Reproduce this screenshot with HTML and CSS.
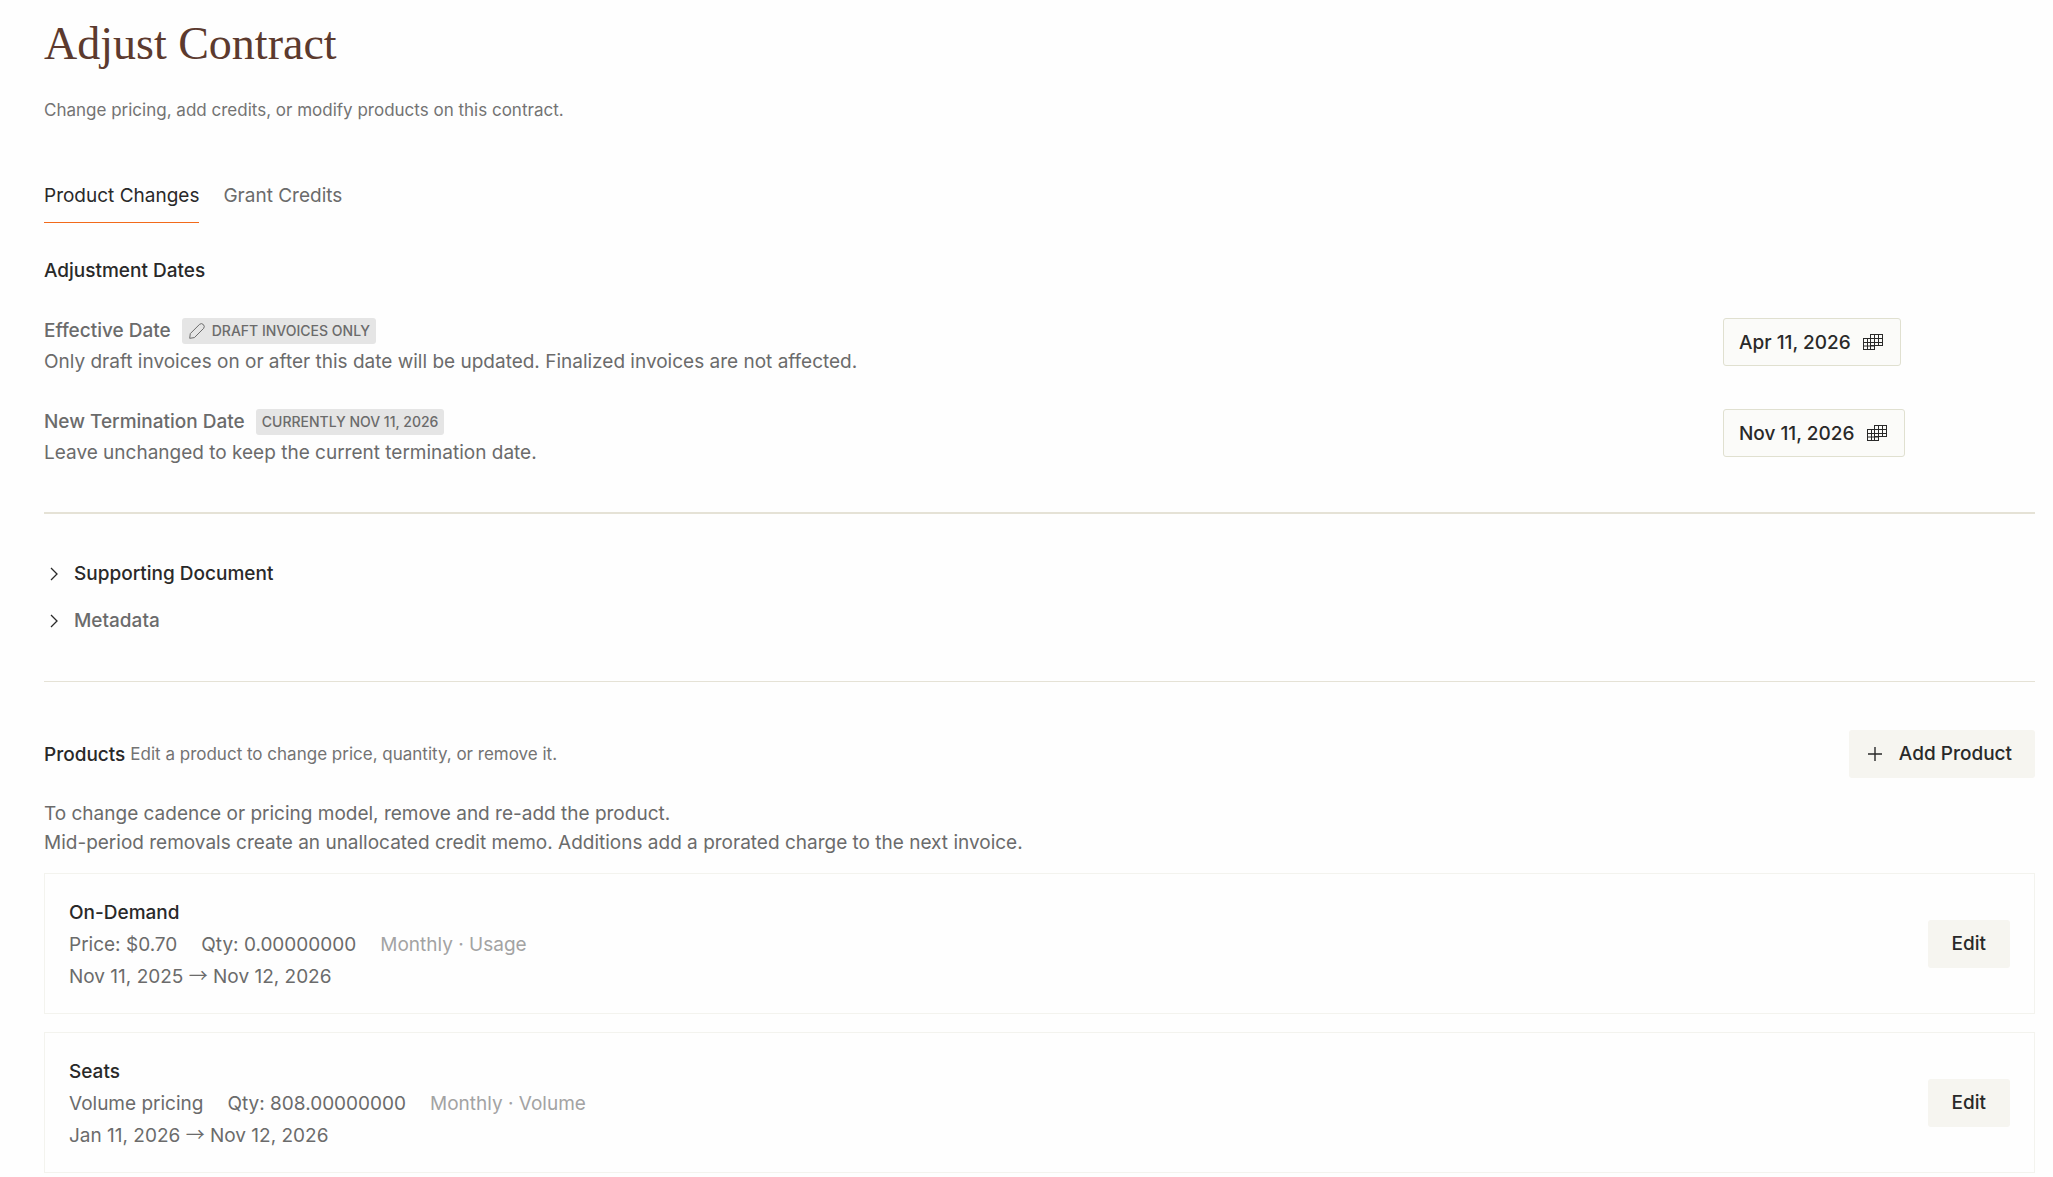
FILE: index.html
```html
<!DOCTYPE html>
<html lang="en">
<head>
    <meta charset="UTF-8">
    <meta name="viewport" content="width=device-width, initial-scale=1.0">
    <title>Adjust Contract</title>
    <link rel="stylesheet" href="styles.css">
</head>
<body>
    <main class="page">
        <header class="page-header">
            <h1>Adjust Contract</h1>
            <p class="subtitle">Change pricing, add credits, or modify products on this contract.</p>
        </header>

        <nav class="tabs">
            <a href="#product-changes" class="tab active">Product Changes</a>
            <a href="#grant-credits" class="tab">Grant Credits</a>
        </nav>

        <section class="dates">
            <h2>Adjustment Dates</h2>

            <div class="date-row">
                <div class="date-info">
                    <div class="date-label">
                        <label for="effectiveDate">Effective Date</label>
                        <span class="badge">
                            <svg width="18" height="18" viewBox="0 0 18 18" fill="none" stroke="currentColor" stroke-linejoin="round">
                                <path d="M1.7 16.3 2.3 11.6 11.6 2.3Q13.5 .8 15.3 2.5T15.7 6.3L6.4 15.6Z"/>
                            </svg>
                            DRAFT INVOICES ONLY
                        </span>
                    </div>
                    <p>Only draft invoices on or after this date will be updated. Finalized invoices are not affected.</p>
                </div>
                <button type="button" class="date-btn" id="effectiveDate">
                    Apr 11, 2026
                    <svg width="20" height="16" viewBox="0 0 20 16" fill="none" stroke="currentColor">
                        <path d="M7.5 .5H19.5M7.5 4.5H19.5M.5 8.5H19.5M.5 4.5H7.5M7.5 11.5H19.5M.5 12H12M.5 15.5H12M.5 4V16M4.5 4V16M7.5 0V16M11.5 0V16M15.5 0V12M19.5 0V12"/>
                    </svg>
                </button>
            </div>

            <div class="date-row">
                <div class="date-info">
                    <div class="date-label">
                        <label for="terminationDate">New Termination Date</label>
                        <span class="badge">CURRENTLY NOV 11, 2026</span>
                    </div>
                    <p>Leave unchanged to keep the current termination date.</p>
                </div>
                <button type="button" class="date-btn" id="terminationDate">
                    Nov 11, 2026
                    <svg width="20" height="16" viewBox="0 0 20 16" fill="none" stroke="currentColor">
                        <path d="M7.5 .5H19.5M7.5 4.5H19.5M.5 8.5H19.5M.5 4.5H7.5M7.5 11.5H19.5M.5 12H12M.5 15.5H12M.5 4V16M4.5 4V16M7.5 0V16M11.5 0V16M15.5 0V12M19.5 0V12"/>
                    </svg>
                </button>
            </div>
        </section>

        <section class="extras">
            <details>
                <summary>
                    <svg width="20" height="20" viewBox="0 0 20 20" fill="none" stroke="currentColor" stroke-width="1.3">
                        <path d="M7 4 13 10 7 16"/>
                    </svg>
                    Supporting Document
                </summary>
            </details>
            <details>
                <summary>
                    <svg width="20" height="20" viewBox="0 0 20 20" fill="none" stroke="currentColor" stroke-width="1.3">
                        <path d="M7 4 13 10 7 16"/>
                    </svg>
                    <span class="muted">Metadata</span>
                </summary>
            </details>
        </section>

        <section class="products">
            <div class="products-header">
                <div class="products-title">
                    <h2>Products</h2>
                    <span class="hint">Edit a product to change price, quantity, or remove it.</span>
                </div>
                <button type="button" class="btn btn-add">
                    <svg width="14" height="14" viewBox="0 0 14 14" fill="none" stroke="currentColor" stroke-width="1.4">
                        <path d="M7 0V14M0 7H14"/>
                    </svg>
                    Add Product
                </button>
            </div>

            <p class="note">To change cadence or pricing model, remove and re-add the product.<br>Mid-period removals create an unallocated credit memo. Additions add a prorated charge to the next invoice.</p>

            <div class="product-list">
                <article class="card">
                    <div class="card-body">
                        <h3>On-Demand</h3>
                        <div class="card-meta">
                            <span>Price: $0.70</span>
                            <span>Qty: 0.00000000</span>
                            <span class="faint">Monthly · Usage</span>
                        </div>
                        <p class="card-dates">Nov 11, 2025 <span class="arrow">→</span> Nov 12, 2026</p>
                    </div>
                    <button type="button" class="btn">Edit</button>
                </article>

                <article class="card">
                    <div class="card-body">
                        <h3>Seats</h3>
                        <div class="card-meta">
                            <span>Volume pricing</span>
                            <span>Qty: 808.00000000</span>
                            <span class="faint">Monthly · Volume</span>
                        </div>
                        <p class="card-dates">Jan 11, 2026 <span class="arrow">→</span> Nov 12, 2026</p>
                    </div>
                    <button type="button" class="btn">Edit</button>
                </article>
            </div>
        </section>
    </main>
</body>
</html>
```
FILE: styles.css
```css
* {
    margin: 0;
    padding: 0;
    box-sizing: border-box;
}

body {
    font-family: Inter, 'Liberation Sans', sans-serif;
    font-size: 19px;
    line-height: 32px;
    color: #6b6b6b;
    background: #fefefe;
}

button {
    font: inherit;
    cursor: pointer;
}

svg {
    flex: none;
}

.page {
    padding: 8px 18px 4px 44px;
}

h1 {
    font-family: 'Liberation Serif', serif;
    font-size: 46px;
    line-height: 72px;
    font-weight: 400;
    color: #5c3a2e;
}

h2,
h3 {
    font-size: 19px;
    font-weight: 500;
    color: #292929;
}

h2 {
    line-height: 31px;
}

.subtitle,
.hint {
    font-size: 17px;
    color: #737373;
}

.subtitle {
    margin-top: 14px;
}

.tabs {
    display: flex;
    gap: 24px;
    margin-top: 48px;
}

.tab {
    height: 49px;
    padding-top: 6px;
    color: #6b6b6b;
    text-decoration: none;
}

.tab.active {
    color: #292929;
    border-bottom: 1px solid #f26a1b;
}

.dates {
    margin-top: 32px;
    padding-bottom: 44px;
    border-bottom: 2px solid #e5e2d6;
}

.date-row {
    display: grid;
    grid-template-columns: 1fr 312px;
    align-items: start;
    margin-top: 29px;
    line-height: 31px;
}

.date-label {
    display: flex;
    align-items: center;
    gap: 11px;
    font-weight: 500;
}

.badge {
    display: inline-flex;
    align-items: center;
    gap: 6px;
    height: 26px;
    padding: 0 6px;
    border-radius: 3px;
    background: #e5e5e5;
    font-size: 14px;
}

.date-btn {
    display: flex;
    align-items: center;
    gap: 12px;
    justify-self: start;
    height: 48px;
    margin-top: 3px;
    padding: 0 17px 0 15px;
    border: 1px solid #e0e0d0;
    border-radius: 3px;
    background: #fbfbf9;
    color: #292929;
    font-weight: 500;
}

.extras {
    padding: 44px 0;
    border-bottom: 1px solid #e5e2d6;
}

.extras details + details {
    margin-top: 15px;
}

.extras summary {
    display: flex;
    align-items: center;
    gap: 10px;
    list-style: none;
    font-weight: 500;
    color: #292929;
    cursor: pointer;
}

.extras .muted {
    color: #6b6b6b;
}

.products {
    padding-top: 48px;
}

.products-header {
    display: flex;
    justify-content: space-between;
    align-items: center;
}

.products-title {
    display: flex;
    align-items: center;
    gap: 5px;
}

.btn {
    height: 48px;
    padding: 0 24px;
    border: none;
    border-radius: 3px;
    background: #f6f5f0;
    color: #292929;
    font-weight: 500;
}

.btn-add {
    display: flex;
    align-items: center;
    gap: 17px;
    padding: 0 23px 0 19px;
}

.note {
    margin-top: 21px;
    line-height: 29px;
}

.product-list {
    display: grid;
    gap: 18px;
    margin-top: 16px;
}

.card {
    display: flex;
    justify-content: space-between;
    align-items: center;
    padding: 21px 24px 20px;
    border: 1px solid #f3f3ee;
}

.card-body {
    padding-top: 2px;
}

.card-meta {
    display: flex;
    gap: 24px;
}

.card-dates {
    height: 32px;
}

.arrow {
    font-family: 'Noto Sans CJK JP', sans-serif;
    line-height: 1;
}

.faint {
    color: #a3a3a3;
}
```
